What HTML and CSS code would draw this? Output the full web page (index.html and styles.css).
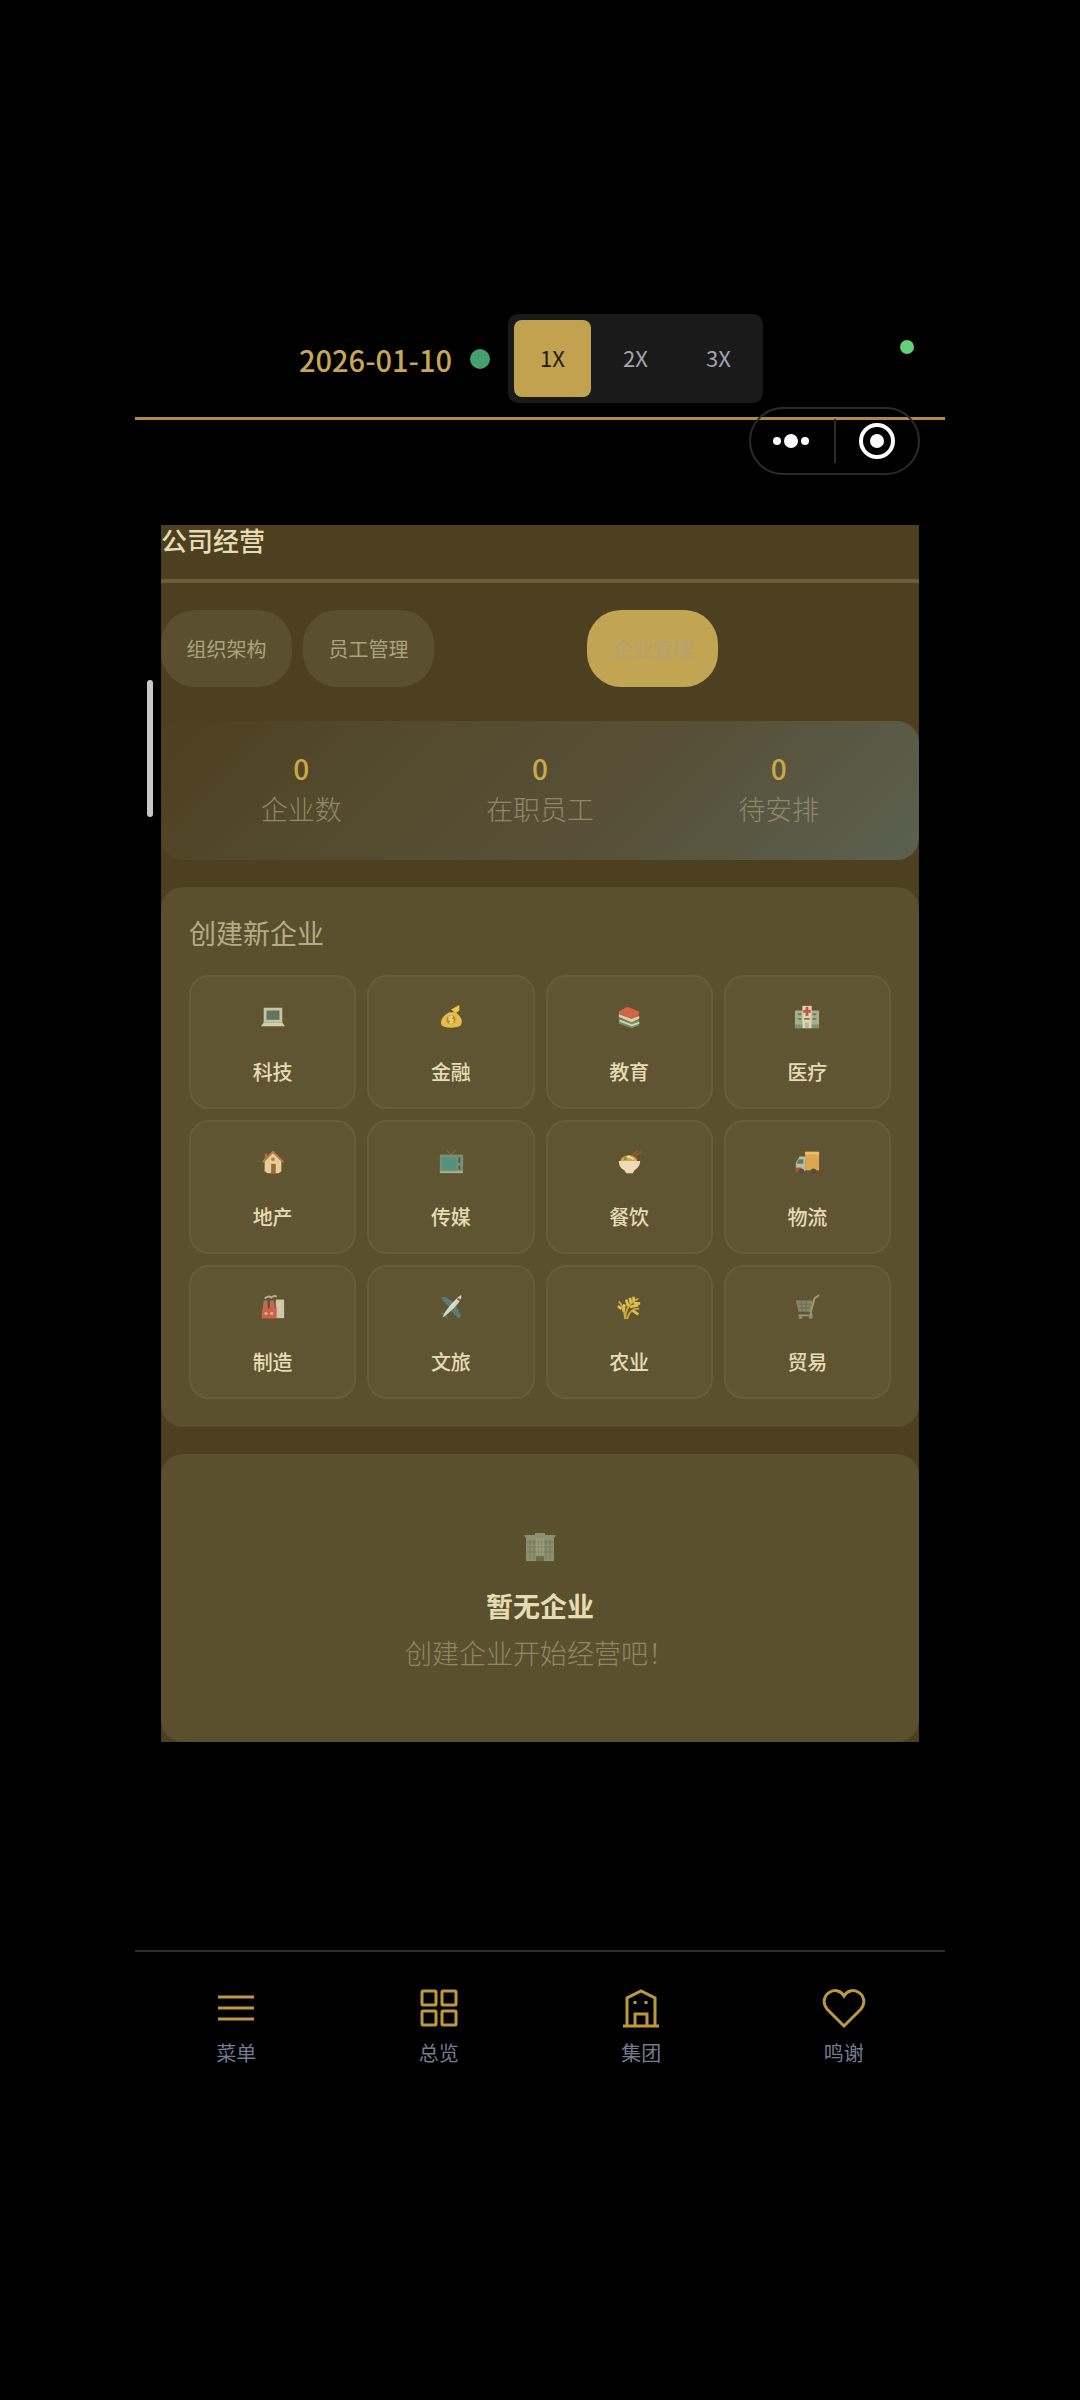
FILE: index.html
```html
<!DOCTYPE html>
<html lang="zh-CN">
<head>
    <meta charset="UTF-8">
    <title>公司经营</title>
    <meta name="viewport" content="width=device-width, initial-scale=1">
    <link rel="stylesheet" href="styles.css">
</head>
<body>
<div class="app">
    <!-- 顶部栏 -->
    <header class="topbar">
        <span class="date">2026-01-10</span>
        <span class="status-dot"></span>
        <div class="speed-group">
            <button class="speed-btn active">1X</button>
            <button class="speed-btn">2X</button>
            <button class="speed-btn">3X</button>
        </div>
        <span class="camera-dot"></span>
        <div class="capsule">
            <button class="capsule-btn" aria-label="更多">
                <svg width="40" height="40" viewBox="0 0 40 40" fill="#fff"><circle cx="5" cy="20" r="4"/><circle cx="19" cy="20" r="7"/><circle cx="33" cy="20" r="4"/></svg>
            </button>
            <button class="capsule-btn" aria-label="关闭">
                <svg width="40" height="40" viewBox="0 0 40 40"><circle cx="20" cy="20" r="16" fill="none" stroke="#fff" stroke-width="4"/><circle cx="20" cy="20" r="7" fill="#fff"/></svg>
            </button>
        </div>
    </header>

    <main class="panel">
        <span class="scroll-thumb"></span>
        <h1 class="panel-title">公司经营</h1>

        <!-- 标签页 -->
        <div class="tabs">
            <button class="tab">组织架构</button>
            <button class="tab">员工管理</button>
            <button class="tab active">企业管理</button>
        </div>

        <!-- 统计 -->
        <section class="stats">
            <div class="stat"><div class="stat-value">0</div><div class="stat-label">企业数</div></div>
            <div class="stat"><div class="stat-value">0</div><div class="stat-label">在职员工</div></div>
            <div class="stat"><div class="stat-value">0</div><div class="stat-label">待安排</div></div>
        </section>

        <!-- 创建新企业 -->
        <section class="card">
            <h2 class="card-title">创建新企业</h2>
            <div class="industry-grid">
                <button class="industry">
                    <svg viewBox="0 0 28 28"><path d="M4 4h20v16H4z" fill="#c3c5a4"/><path d="M7 7h14v10H7z" fill="#66745a"/><path d="M4 20h20l3 4H1z" fill="#d0d0ac"/></svg>
                    <span>科技</span>
                </button>
                <button class="industry">
                    <svg viewBox="0 0 28 28"><path d="M14 6l9-5v6l-4 3z" fill="#f0c24a"/><path d="M12 9h7c5 4 8 8 6 13-2 4-18 5-21 1-3-6 3-11 8-14z" fill="#e6bd48"/><circle cx="14" cy="17" r="5" fill="#b58b2e"/><path d="M16 14h-4v3h4v3h-4M14 12v10" fill="none" stroke="#f3d67c" stroke-width="1.5"/></svg>
                    <span>金融</span>
                </button>
                <button class="industry">
                    <svg viewBox="0 0 28 28"><path d="M3 8l9-5 13 5-1 6-7 2-14-5z" fill="#cf6544"/><path d="M3 11l14 5 8-3v3l-8 4-14-6z" fill="#e0cfa6"/><path d="M3 15l14 5 8-3v6l-8 3-14-5z" fill="#71916b"/><path d="M4 18l13 5 8-3" fill="none" stroke="#d3d3ae" stroke-width="2"/></svg>
                    <span>教育</span>
                </button>
                <button class="industry">
                    <svg viewBox="0 0 28 28"><path d="M1 7h26v19H1z" fill="#a6af8c"/><path d="M9 2h10v24H9z" fill="#ddd4b2"/><path d="M14 3v10M10 8h8" stroke="#cc5140" stroke-width="3"/><path d="M4 11h4M4 16h4M20 11h4M20 16h4M11 16h6" stroke="#6b7e63" stroke-width="2"/><path d="M1 22h8v4H1zM19 22h8v4h-8z" fill="#7d9470"/><path d="M12 20h4v6h-4z" fill="#b8b394"/></svg>
                    <span>医疗</span>
                </button>
                <button class="industry">
                    <svg viewBox="0 0 28 28"><path d="M5 5h3v8H5z" fill="#b5624a"/><path d="M5 13l9-9 9 9v11l-3 2H8l-3-2z" fill="#e5cf96"/><path d="M3 14L14 3l11 11" fill="none" stroke="#bd7650" stroke-width="2"/><path d="M12 16h5v10h-5z" fill="#9c6a3d"/><circle cx="14" cy="11" r="2" fill="#a88354"/></svg>
                    <span>地产</span>
                </button>
                <button class="industry">
                    <svg viewBox="0 0 28 28"><path d="M9 1l5 5 5-5" fill="none" stroke="#716a4b" stroke-width="1.5"/><path d="M2 6h25v19H2z" fill="#7b8f72"/><path d="M4 9h16v13H4z" fill="#54907e"/><path d="M23 9v6M23 18v4" stroke="#425d50" stroke-width="2"/><path d="M2 25h25" stroke="#a7b38e" stroke-width="2"/></svg>
                    <span>传媒</span>
                </button>
                <button class="industry">
                    <svg viewBox="0 0 28 28"><path d="M14 10l9-8M18 10l9-7" stroke="#a45a32" stroke-width="1.5"/><path d="M5 13c0-8 17-8 18 0z" fill="#d5a64a"/><path d="M8 11l6-3 5 3" fill="none" stroke="#f1dc8a" stroke-width="2"/><path d="M3 13h23c0 5-3 8-6 10l-2 3h-7l-2-3c-4-2-6-5-6-10z" fill="#eedcb6"/><circle cx="10" cy="10" r="2" fill="#7f9550"/></svg>
                    <span>餐饮</span>
                </button>
                <button class="industry">
                    <svg viewBox="0 0 28 28"><path d="M12 3h15v20H12z" fill="#dda84c"/><path d="M12 3h15v3H12z" fill="#e9bd6b"/><path d="M6 8h6v16H2v-9z" fill="#bcbea1"/><path d="M5 11h5v5H3z" fill="#607978"/><path d="M2 20h6v4H2z" fill="#bb4c3b"/><circle cx="8" cy="24" r="3" fill="#584d39"/><circle cx="21" cy="24" r="3" fill="#584d39"/></svg>
                    <span>物流</span>
                </button>
                <button class="industry">
                    <svg viewBox="0 0 28 28"><path d="M5 5q4-4 7-1 3-3 6-1" fill="none" stroke="#b9ae91" stroke-width="2"/><path d="M4 7h4l1 19H2zM11 7h4l2 19h-7z" fill="#bf6c57"/><path d="M17 6h9v20h-9z" fill="#cdc7a6"/><path d="M2 17l6-4v4l6-4v4l4-3v12H2z" fill="#d0604a"/><path d="M5 21h3M11 21h3M20 11h3M20 17h3" stroke="#f0cbaa" stroke-width="2"/></svg>
                    <span>制造</span>
                </button>
                <button class="industry">
                    <svg viewBox="0 0 28 28"><path d="M3 4l4-1 10 6-5 5zM19 12l6 12-3 2-8-8z" fill="#557d81"/><path d="M3 20l6 1 2 6-3-2z" fill="#4b7b8a"/><path d="M5 25c1-5 13-20 20-24 2 6-13 20-20 24z" fill="#d9d7b8"/><path d="M21 5l3 2" stroke="#547077" stroke-width="2"/></svg>
                    <span>文旅</span>
                </button>
                <button class="industry">
                    <svg viewBox="0 0 28 28" fill="none" stroke="#cba93b" stroke-width="2"><path d="M10 27C10 17 15 9 24 5M10 27C9 17 7 12 3 8M12 27c2-8 7-12 13-11"/><path d="M13 13l-2-7M16 10l-1-6M19 8V3M15 14l9-2M19 10h7M6 16l-4-3M8 19l1-8M18 18l6 4" stroke="#dbbf4e" stroke-width="3"/></svg>
                    <span>农业</span>
                </button>
                <button class="industry">
                    <svg viewBox="0 0 28 28"><path d="M2 7h18l-2 12H5z" fill="#84866c"/><path d="M5 11h13M5 15h12M8 7l1 12M13 7v12" stroke="#66674c" stroke-width="1"/><path d="M27 1l-5 4-4 15 1 3H5" fill="none" stroke="#9b997b" stroke-width="2"/><circle cx="7" cy="25" r="2" fill="#8b8c74"/><circle cx="18" cy="25" r="2" fill="#8b8c74"/></svg>
                    <span>贸易</span>
                </button>
            </div>
        </section>

        <!-- 空状态 -->
        <section class="card empty">
            <svg class="empty-icon" viewBox="0 0 32 32"><path d="M0 4h11V2h10v2h11l-2 3v23H2V7z" fill="#8d9070"/><path d="M6 9v20M10 9v20M22 9v20M26 9v20" stroke="#747956" stroke-width="1"/><path d="M3 11h26M3 16h26M3 21h26" stroke="#777b59" stroke-width="1"/><path d="M13 7v18M16 7v18M19 7v18" stroke="#a3a482" stroke-width="1"/><path d="M12 25h8v5h-8z" fill="#6b6e4d"/></svg>
            <div class="empty-title">暂无企业</div>
            <div class="empty-text">创建企业开始经营吧！</div>
        </section>
    </main>

    <!-- 底部导航 -->
    <nav class="bottom-nav">
        <a href="#menu">
            <svg viewBox="0 0 44 44"><path d="M4 11h36M4 22h36M4 33h36"/></svg>
            <span>菜单</span>
        </a>
        <a href="#overview">
            <svg viewBox="0 0 44 44"><rect x="5" y="5" width="14" height="14" rx="1"/><rect x="25" y="5" width="14" height="14" rx="1"/><rect x="5" y="25" width="14" height="14" rx="1"/><rect x="25" y="25" width="14" height="14" rx="1"/></svg>
            <span>总览</span>
        </a>
        <a href="#group">
            <svg viewBox="0 0 44 44"><path d="M4 40h36M8 40V12l14-7 14 7v28M16 40V28h12v12M16 15v3M27 15v3"/></svg>
            <span>集团</span>
        </a>
        <a href="#thanks">
            <svg viewBox="0 0 44 44"><path d="M22 40L5 23C0 17 2 9 8 6c5-3 11-1 14 4 3-5 9-7 14-4 6 3 8 11 3 17z"/></svg>
            <span>鸣谢</span>
        </a>
    </nav>
</div>
</body>
</html>
```
FILE: styles.css
```css
* { box-sizing: border-box; }
body { margin: 0; background: #000; color: #e6dcb4; font-family: "Noto Sans CJK SC", "Noto Sans", sans-serif; }
button { border: none; margin: 0; padding: 0; font-family: inherit; color: inherit; cursor: pointer; }
h1, h2 { margin: 0; }
.app { width: 75%; margin: 0 auto; padding-top: 314px; }

.topbar { position: relative; display: flex; align-items: center; justify-content: center; gap: 18px; padding: 0 18px 14px 0; border-bottom: 3px solid #ae8a42; }
.date { color: #c9a655; font-size: 29px; font-weight: 500; line-height: 40px; }
.status-dot { width: 20px; height: 20px; border-radius: 50%; background: #45a070; }
.speed-group { display: flex; gap: 6px; padding: 6px; border-radius: 10px; background: #1a1a1b; }
.speed-btn { width: 77px; height: 77px; padding-bottom: 3px; border-radius: 8px; background: none; color: #a3a3ab; font-size: 22px; }
.speed-btn.active { background: #c2a24e; color: #221c10; }
.camera-dot { position: absolute; top: 26px; right: 31px; width: 14px; height: 14px; border-radius: 50%; background: #64ce78; }
.capsule { position: absolute; top: 93px; right: 25px; display: flex; align-items: center; width: 171px; height: 68px; border: 2px solid #2d2b2a; border-radius: 34px; }
.capsule-btn { flex: 1; display: flex; align-items: center; justify-content: center; height: 44px; background: none; }
.capsule-btn + .capsule-btn { border-left: 2px solid #2d2b2a; }

.panel { position: relative; margin: 105px 26px 0; background: #4c4020; }
.scroll-thumb { position: absolute; top: 155px; left: -14px; width: 6px; height: 137px; border-radius: 3px; background: #c8c8c8; }
.panel-title { padding-bottom: 24px; border-bottom: 4px solid #6b5d37; font-size: 26px; font-weight: 500; line-height: 30px; }

.tabs { display: grid; grid-template-columns: repeat(4, 131px); gap: 11px; margin: 27px 0 34px; }
.tab { height: 77px; border-radius: 34px; background: #5a4f2e; color: #aba47f; font-size: 20px; }
.tab.active { grid-column: 4; background: #c2a552; color: #b3a277; }

.stats { display: grid; grid-template-columns: repeat(3, 1fr); margin-bottom: 27px; padding: 27px 21px 30px; border-radius: 22px; background: linear-gradient(135deg, #4e4122 5%, #544b2d 30%, #58513a 65%, #5b6150 100%); text-align: center; }
.stat-value { color: #cba948; font-size: 28px; font-weight: 500; line-height: 40px; }
.stat-label { color: #8f886a; font-size: 27px; font-weight: 300; line-height: 42px; }

.card { margin-bottom: 27px; padding: 28px; border-radius: 22px; background: #5b502e; }
.card-title { margin-bottom: 24px; color: #b5ac85; font-size: 27px; font-weight: 400; line-height: 36px; }
.industry-grid { display: grid; grid-template-columns: repeat(4, 1fr); gap: 11px; }
.industry { display: flex; flex-direction: column; align-items: center; gap: 27px; padding: 26px 0 21px; border: 2px solid #695d38; border-radius: 20px; background: #605533; font-size: 20px; font-weight: 500; line-height: 28px; }
.industry svg { width: 28px; height: 28px; padding: 1px; }

.empty { display: flex; flex-direction: column; align-items: center; gap: 5px; margin-bottom: 0; padding: 77px 28px 68px; }
.empty-icon { width: 32px; height: 32px; margin-bottom: 17px; }
.empty-title { font-size: 27px; font-weight: 700; line-height: 42px; }
.empty-text { color: #8f8862; font-size: 27px; font-weight: 300; line-height: 42px; }

.bottom-nav { display: grid; grid-template-columns: repeat(4, 1fr); margin-top: 208px; padding: 34px 0; border-top: 2px solid #2e2e2e; }
.bottom-nav a { display: flex; flex-direction: column; align-items: center; gap: 9px; color: #747b92; font-size: 20px; line-height: 28px; text-decoration: none; }
.bottom-nav svg { width: 44px; height: 44px; fill: none; stroke: #bd983f; stroke-width: 3; }
```
